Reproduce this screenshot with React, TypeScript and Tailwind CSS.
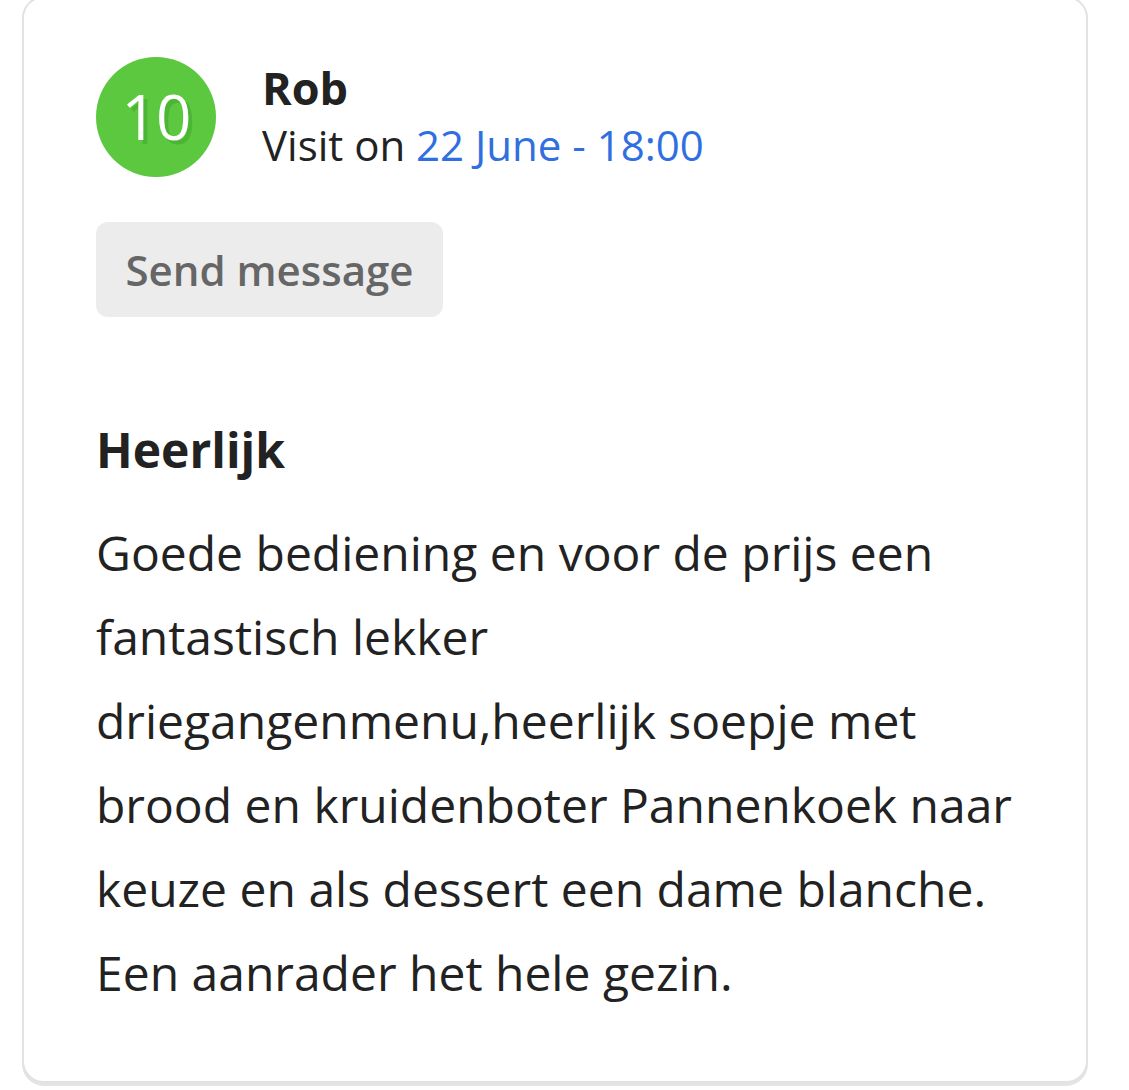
export default function App() {
  const body =
    "Goede bediening en voor de prijs een fantastisch lekker driegangenmenu,heerlijk soepje met brood en kruidenboter Pannenkoek naar keuze en als dessert een dame blanche. Een aanrader het hele gezin.";

  return (
    <main
      className="w-[1129px] h-[1090px] bg-white overflow-hidden"
      style={{ fontFamily: '"Open Sans", "Noto Sans", sans-serif' }}
    >
      <div className="ml-[22px] -mt-[4px] w-[1066px] h-[1087px] rounded-[22px] border-2 border-[#e2e2e2] bg-white shadow-[0_3px_0_#e4e4e4] pl-[72px] pr-[50px] pt-[59px]">
        <div className="flex items-start gap-[46px]">
          <div className="w-[120px] h-[120px] rounded-full bg-[#5bc83f] flex items-center justify-center shrink-0">
            <span className="text-white text-[62px] font-medium leading-none tracking-[-1px] [text-shadow:4px_4px_0_#4cb634] -mt-[2px]">
              10
            </span>
          </div>
          <div className="pt-[3px]">
            <div className="text-[45px] font-bold text-[#222] leading-[56px]">Rob</div>
            <div className="text-[42px] text-[#222] leading-[58px]">
              Visit on <span className="text-[#2f6fe0]">22 June - 18:00</span>
            </div>
          </div>
        </div>

        <button className="mt-[45px] h-[95px] w-[347px] rounded-[12px] bg-[#ececec] text-[42px] font-semibold text-[#666] flex items-center justify-center">
          Send message
        </button>

        <h2 className="mt-[105px] text-[48px] font-bold text-[#222] leading-[56px]">Heerlijk</h2>
        <p className="mt-[33px] text-[48px] text-[#222] leading-[84px] w-[940px]">{body}</p>
      </div>
    </main>
  );
}
